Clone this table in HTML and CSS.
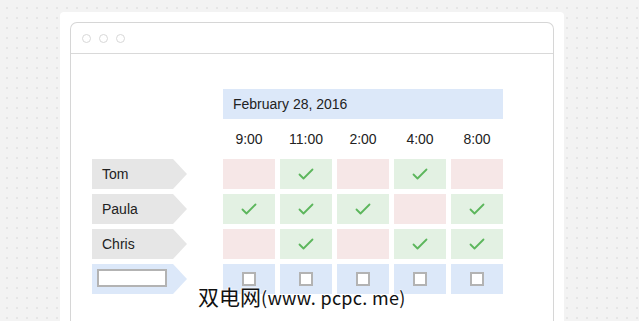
FILE: index.html
```html
<!DOCTYPE html>
<html>
<head>
  <link rel="stylesheet" href="styles.css">
</head>
<body>
  <div class="card">
    <div class="window">
      <div class="titlebar">
        <span class="light"></span>
        <span class="light"></span>
        <span class="light"></span>
      </div>

      <div class="content">
        <div class="schedule">
          <div class="date">February 28, 2016</div>

          <div class="time">9:00</div>
          <div class="time">11:00</div>
          <div class="time">2:00</div>
          <div class="time">4:00</div>
          <div class="time">8:00</div>

          <div class="name"><span>Tom</span></div>
          <div class="cell no"></div>
          <div class="cell yes"><svg viewBox="0 0 16 13"><polyline points="1.5,6.5 5.5,10.5 14.5,1.5"/></svg></div>
          <div class="cell no"></div>
          <div class="cell yes"><svg viewBox="0 0 16 13"><polyline points="1.5,6.5 5.5,10.5 14.5,1.5"/></svg></div>
          <div class="cell no"></div>

          <div class="name"><span>Paula</span></div>
          <div class="cell yes"><svg viewBox="0 0 16 13"><polyline points="1.5,6.5 5.5,10.5 14.5,1.5"/></svg></div>
          <div class="cell yes"><svg viewBox="0 0 16 13"><polyline points="1.5,6.5 5.5,10.5 14.5,1.5"/></svg></div>
          <div class="cell yes"><svg viewBox="0 0 16 13"><polyline points="1.5,6.5 5.5,10.5 14.5,1.5"/></svg></div>
          <div class="cell no"></div>
          <div class="cell yes"><svg viewBox="0 0 16 13"><polyline points="1.5,6.5 5.5,10.5 14.5,1.5"/></svg></div>

          <div class="name"><span>Chris</span></div>
          <div class="cell no"></div>
          <div class="cell yes"><svg viewBox="0 0 16 13"><polyline points="1.5,6.5 5.5,10.5 14.5,1.5"/></svg></div>
          <div class="cell no"></div>
          <div class="cell yes"><svg viewBox="0 0 16 13"><polyline points="1.5,6.5 5.5,10.5 14.5,1.5"/></svg></div>
          <div class="cell yes"><svg viewBox="0 0 16 13"><polyline points="1.5,6.5 5.5,10.5 14.5,1.5"/></svg></div>

          <div class="name new"><input type="text" class="name-input"></div>
          <div class="cell pick"><span class="box"></span></div>
          <div class="cell pick"><span class="box"></span></div>
          <div class="cell pick"><span class="box"></span></div>
          <div class="cell pick"><span class="box"></span></div>
          <div class="cell pick"><span class="box"></span></div>
        </div>
      </div>
    </div>
  </div>

  <div class="watermark">双电网<span class="site">(www. pcpc. me)</span></div>
</body>
</html>
```

FILE: styles.css
```css
body {
  margin: 0;
  height: 321px;
  overflow: hidden;
  font-family: "Liberation Sans", Arial, sans-serif;
  color: #222222;
  background-color: #f3f3f3;
  background-image: radial-gradient(circle, #e6e6e6 1px, transparent 1.2px);
  background-size: 10px 10px;
  background-position: 2px 3px;
  position: relative;
}
.card {
  margin: 12px 0 0 60px;
  width: 504px;
  box-sizing: border-box;
  padding: 10px 10px 0;
  background: white;
  border-radius: 4px 4px 0 0;
}
.window {
  border: 1px solid #d6d6d6;
  border-bottom: none;
  border-radius: 7px 7px 0 0;
}
.titlebar {
  height: 30px;
  display: flex;
  align-items: center;
  gap: 8px;
  padding-left: 11px;
  border-bottom: 1px solid #d9d9d9;
}
.light {
  width: 7px;
  height: 7px;
  border: 1px solid #d8d8d8;
  border-radius: 50%;
}
.content {
  padding: 35px 0 60px 21px;
}
.schedule {
  display: grid;
  grid-template-columns: 126px repeat(5, 52px);
  grid-auto-rows: 30px;
  gap: 5px;
  font-size: 14px;
}
.date {
  grid-column: 2 / -1;
  background: #dce8f9;
  display: flex;
  align-items: center;
  padding-left: 10px;
}
.time {
  display: flex;
  align-items: center;
  justify-content: center;
}
.time:nth-child(2) {
  grid-column-start: 2;
}
.name {
  width: 95px;
  display: flex;
  align-items: center;
  padding-left: 10px;
  box-sizing: border-box;
  background: #e6e6e6;
  clip-path: polygon(0 0, 81px 0, 95px 50%, 81px 100%, 0 100%);
}
.name.new {
  background: #dce8f9;
  padding-left: 5px;
}
.name-input {
  width: 70px;
  height: 18px;
  box-sizing: border-box;
  margin: 0 0 2px;
  border: 2px solid #b3b3b3;
  background: white;
  padding: 0;
}
.cell {
  display: flex;
  align-items: center;
  justify-content: center;
}
.cell.no {
  background: #f6e7e7;
}
.cell.yes {
  background: #e3f1e3;
}
.cell.pick {
  background: #dce8f9;
}
.cell svg {
  width: 16px;
  height: 13px;
  fill: none;
  stroke: #5cb65c;
  stroke-width: 1.8;
  stroke-linecap: round;
  stroke-linejoin: round;
}
.box {
  width: 14px;
  height: 14px;
  box-sizing: border-box;
  border: 2px solid #b3b3b3;
  background: white;
}
.watermark {
  position: absolute;
  left: 198px;
  top: 284px;
  font-family: "Noto Sans CJK SC", sans-serif;
  font-size: 21px;
  line-height: 24px;
  color: #111111;
  text-shadow: 0 0 2px white, 0 0 2px white, 0 0 2px white;
}
.site {
  font-size: 18px;
  letter-spacing: 0.3px;
}
```
